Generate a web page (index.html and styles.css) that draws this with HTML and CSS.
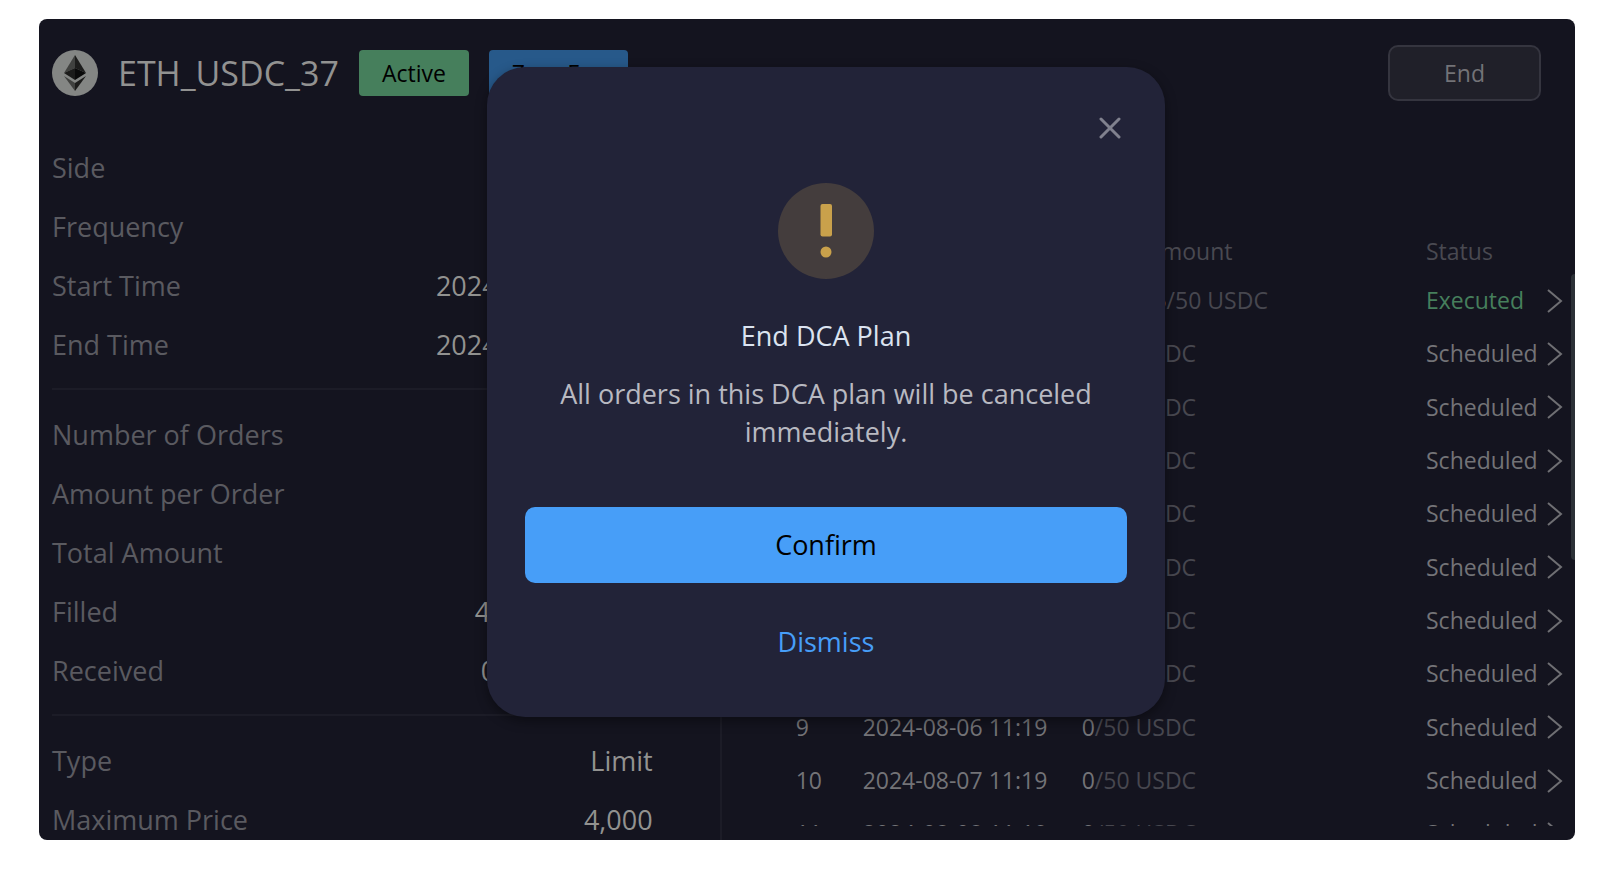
FILE: index.html
```html
<!DOCTYPE html>
<html lang="en">
<head>
<meta charset="utf-8">
<title>ETH_USDC_37</title>
<link rel="stylesheet" href="styles.css">
</head>
<body>
<main class="panel">
  <header class="plan-head">
    <svg class="coin" viewBox="0 0 46 46" aria-hidden="true">
      <circle cx="23" cy="23" r="23" fill="#848684"/>
      <path d="M23 5 12 23l11-5z" fill="#40413f"/>
      <path d="M23 5v13l11 5z" fill="#1d1d1c"/>
      <path d="M12 23l11-5v12z" fill="#1b1b1a"/>
      <path d="M34 23l-11-5v12z" fill="#0a0a0a"/>
      <path d="M12 26l11 7v8z" fill="#40413f"/>
      <path d="M34 26l-11 7v8z" fill="#1d1d1c"/>
    </svg>
    <h1 class="plan-name">ETH_USDC_37</h1>
    <span class="badge badge-active">Active</span>
    <span class="badge badge-fee">Zero Fee</span>
    <button class="end-button" type="button">End</button>
  </header>
  <div class="plan-body">
    <section class="details">
      <dl class="group">
        <div class="row"><dt>Side</dt><dd>Buy</dd></div>
        <div class="row"><dt>Frequency</dt><dd>Daily</dd></div>
        <div class="row"><dt>Start Time</dt><dd>2024-07-29 11:19</dd></div>
        <div class="row"><dt>End Time</dt><dd>2024-08-27 11:19</dd></div>
      </dl>
      <dl class="group">
        <div class="row"><dt>Number of Orders</dt><dd>30</dd></div>
        <div class="row"><dt>Amount per Order</dt><dd>50 USDC</dd></div>
        <div class="row"><dt>Total Amount</dt><dd>1,500 USDC</dd></div>
        <div class="row"><dt>Filled</dt><dd>49.9985 USDC</dd></div>
        <div class="row"><dt>Received</dt><dd>0.015063 ETH</dd></div>
      </dl>
      <dl class="group">
        <div class="row"><dt>Type</dt><dd>Limit</dd></div>
        <div class="row"><dt>Maximum Price</dt><dd>4,000</dd></div>
      </dl>
    </section>
    <section class="orders">
      <div class="orders-view">
        <table class="orders-table">
          <colgroup><col class="col-index"><col class="col-time"><col><col class="col-status"><col class="col-open"></colgroup>
          <thead><tr><th>#</th><th>Time</th><th>Filled/Amount</th><th>Status</th><th></th></tr></thead>
          <tbody>
            <tr><td>1</td><td>2024-07-29 11:19</td><td>49.9985<span class="of">/50 USDC</span></td><td class="executed">Executed</td><td><button class="open" type="button" aria-label="Open order 1"><svg viewBox="0 0 16 24"><path d="M1 1l13 11L1 23"/></svg></button></td></tr>
            <tr><td>2</td><td>2024-07-30 11:19</td><td>0<span class="of">/50 USDC</span></td><td>Scheduled</td><td><button class="open" type="button" aria-label="Open order 2"><svg viewBox="0 0 16 24"><path d="M1 1l13 11L1 23"/></svg></button></td></tr>
            <tr><td>3</td><td>2024-07-31 11:19</td><td>0<span class="of">/50 USDC</span></td><td>Scheduled</td><td><button class="open" type="button" aria-label="Open order 3"><svg viewBox="0 0 16 24"><path d="M1 1l13 11L1 23"/></svg></button></td></tr>
            <tr><td>4</td><td>2024-08-01 11:19</td><td>0<span class="of">/50 USDC</span></td><td>Scheduled</td><td><button class="open" type="button" aria-label="Open order 4"><svg viewBox="0 0 16 24"><path d="M1 1l13 11L1 23"/></svg></button></td></tr>
            <tr><td>5</td><td>2024-08-02 11:19</td><td>0<span class="of">/50 USDC</span></td><td>Scheduled</td><td><button class="open" type="button" aria-label="Open order 5"><svg viewBox="0 0 16 24"><path d="M1 1l13 11L1 23"/></svg></button></td></tr>
            <tr><td>6</td><td>2024-08-03 11:19</td><td>0<span class="of">/50 USDC</span></td><td>Scheduled</td><td><button class="open" type="button" aria-label="Open order 6"><svg viewBox="0 0 16 24"><path d="M1 1l13 11L1 23"/></svg></button></td></tr>
            <tr><td>7</td><td>2024-08-04 11:19</td><td>0<span class="of">/50 USDC</span></td><td>Scheduled</td><td><button class="open" type="button" aria-label="Open order 7"><svg viewBox="0 0 16 24"><path d="M1 1l13 11L1 23"/></svg></button></td></tr>
            <tr><td>8</td><td>2024-08-05 11:19</td><td>0<span class="of">/50 USDC</span></td><td>Scheduled</td><td><button class="open" type="button" aria-label="Open order 8"><svg viewBox="0 0 16 24"><path d="M1 1l13 11L1 23"/></svg></button></td></tr>
            <tr><td>9</td><td>2024-08-06 11:19</td><td>0<span class="of">/50 USDC</span></td><td>Scheduled</td><td><button class="open" type="button" aria-label="Open order 9"><svg viewBox="0 0 16 24"><path d="M1 1l13 11L1 23"/></svg></button></td></tr>
            <tr><td>10</td><td>2024-08-07 11:19</td><td>0<span class="of">/50 USDC</span></td><td>Scheduled</td><td><button class="open" type="button" aria-label="Open order 10"><svg viewBox="0 0 16 24"><path d="M1 1l13 11L1 23"/></svg></button></td></tr>
            <tr><td>11</td><td>2024-08-08 11:19</td><td>0<span class="of">/50 USDC</span></td><td>Scheduled</td><td><button class="open" type="button" aria-label="Open order 11"><svg viewBox="0 0 16 24"><path d="M1 1l13 11L1 23"/></svg></button></td></tr>
          </tbody>
        </table>
        <div class="scroll-thumb"></div>
      </div>
    </section>
  </div>
  <div class="overlay">
    <div class="dialog" role="dialog" aria-modal="true" aria-labelledby="dialog-title">
      <button class="close" type="button" aria-label="Close"><svg viewBox="0 0 22 22"><path d="M2 2l18 18M20 2L2 20"/></svg></button>
      <svg class="warning" viewBox="0 0 96 96" aria-hidden="true">
        <circle cx="48" cy="48" r="48" fill="#443d3d"/>
        <rect x="42.500" y="21" width="11.500" height="32.500" rx="2" fill="#c9a14b"/>
        <circle cx="48" cy="69" r="5.500" fill="#c9a14b"/>
      </svg>
      <h2 class="dialog-title" id="dialog-title">End DCA Plan</h2>
      <p class="dialog-text">All orders in this DCA plan will be canceled immediately.</p>
      <button class="confirm" type="button">Confirm</button>
      <button class="dismiss" type="button">Dismiss</button>
    </div>
  </div>
</main>
</body>
</html>
```

FILE: styles.css
```css
* { box-sizing: border-box; }

body {
  display: flex;
  height: 100vh;
  margin: 0;
  padding: 19px 31px 32px 39px;
  background: #fff;
  font-family: "Open Sans", "Noto Sans", sans-serif;
  font-size: 27px;
  line-height: 38px;
}

h1, h2, p, dl, dd { margin: 0; font-weight: 400; }

button {
  padding: 0;
  border: 0;
  background: none;
  font: inherit;
  cursor: pointer;
}

svg { display: block; }

.panel {
  position: relative;
  display: flex;
  flex: 1;
  flex-direction: column;
  overflow: hidden;
  border-radius: 8px;
  background: #14141f;
}

.plan-head {
  display: flex;
  align-items: center;
  gap: 20px;
  padding: 26px 34px 48px 13px;
}

.coin { width: 46px; height: 46px; }

.plan-name {
  color: #929291;
  font-size: 34px;
  line-height: 46px;
}

.badge {
  padding: 0 23px;
  border-radius: 4px;
  color: #000;
  font-size: 23px;
  line-height: 46px;
}

.badge-active { background: #467f5c; }
.badge-fee { background: #27598a; }

.end-button {
  width: 153px;
  height: 56px;
  margin-left: auto;
  border: 2px solid #35353f;
  border-radius: 10px;
  background: #202029;
  color: #737377;
  font-size: 23px;
}

.plan-body {
  display: grid;
  flex: 1;
  grid-template-columns: 4fr 5fr;
  min-height: 0;
}

.details {
  overflow: hidden;
  padding: 0 67px 0 13px;
  border-right: 2px solid #1c1c27;
}

.group {
  display: flex;
  flex-direction: column;
  gap: 21px;
}

.group + .group {
  margin-top: 24px;
  padding-top: 26px;
  border-top: 2px solid #1c1c27;
}

.row { display: flex; justify-content: space-between; }
.row dt { color: #5a5a60; }
.row dd { color: #929290; }

.orders {
  display: flex;
  min-height: 0;
  padding: 79px 0 14px 74px;
}

.orders-view {
  position: relative;
  flex: 1;
  overflow: hidden;
}

.orders-table {
  width: 100%;
  border-spacing: 0;
  table-layout: fixed;
  color: #737377;
  font-size: 23px;
  line-height: 33px;
}

.col-index { width: 67px; }
.col-time { width: 219px; }
.col-status { width: 121px; }
.col-open { width: 28px; }

.orders-table th,
.orders-table td { padding: 0; text-align: left; white-space: nowrap; }
.orders-table th { height: 46px; color: #494951; font-weight: 400; }
.orders-table td { height: 53px; }
.orders-table tr:nth-child(3n) td { height: 54px; }
.orders-table .of { color: #47474f; }
.orders-table .executed { color: #467f5c; }

.open { display: block; }

.open svg {
  width: 16px;
  height: 24px;
  fill: none;
  stroke: #6f6f73;
  stroke-width: 2;
}

.scroll-thumb {
  position: absolute;
  top: 46px;
  right: 0;
  width: 4px;
  height: 286px;
  border-radius: 4px 0 0 4px;
  background: #2c3137;
}

.overlay {
  position: absolute;
  inset: 0 0 0 38px;
  display: flex;
  align-items: flex-start;
  justify-content: center;
  padding-top: 48px;
}

.dialog {
  display: flex;
  flex-direction: column;
  align-items: center;
  width: 678px;
  padding: 50px 38px 56px;
  border-radius: 38px;
  background: #222338;
  box-shadow: 0 4px 12px rgba(0, 0, 0, 0.4);
  text-align: center;
}

.close { align-self: flex-end; margin-right: 6px; }

.close svg {
  width: 22px;
  height: 22px;
  fill: none;
  stroke: #80818e;
  stroke-width: 3;
  stroke-linecap: round;
}

.warning { width: 96px; height: 96px; margin-top: 44px; }
.dialog-title { margin-top: 38px; color: #dbe3f0; font-size: 27px; }
.dialog-text { margin-top: 20px; color: #b8b9c1; }

.confirm {
  width: 100%;
  height: 76px;
  margin-top: 56px;
  border-radius: 10px;
  background: #479ef8;
  color: #000;
}

.dismiss { margin-top: 40px; color: #479ef8; }
```
